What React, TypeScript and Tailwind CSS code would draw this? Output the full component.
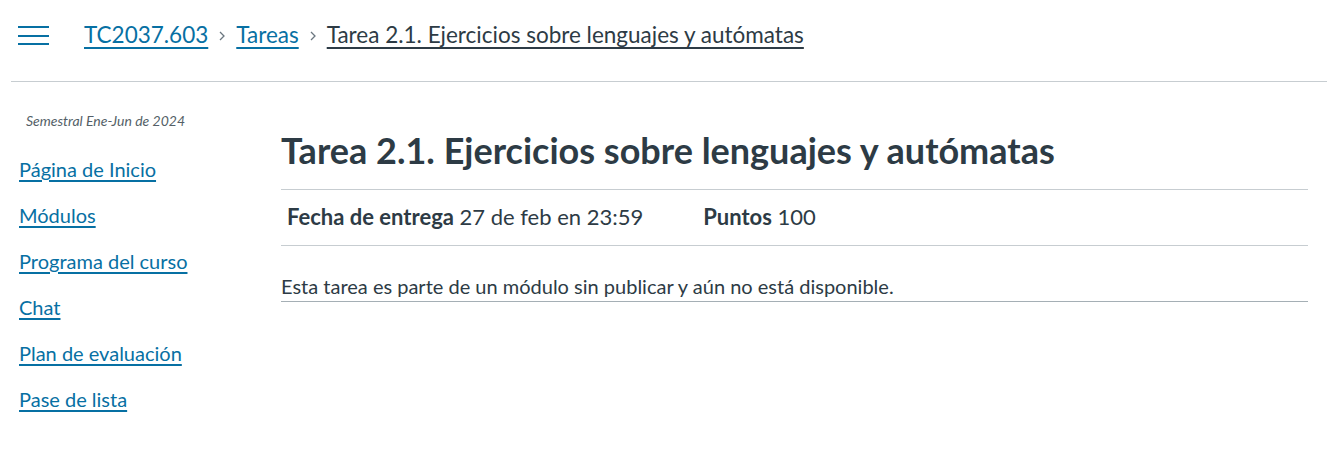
const navLinks = [
  "Página de Inicio",
  "Módulos",
  "Programa del curso",
  "Chat",
  "Plan de evaluación",
  "Pase de lista",
];

function Hamburger() {
  return (
    <button className="flex flex-col justify-between w-[31px] h-[19px] mt-[2px]">
      <span className="block h-[2px] w-full bg-[#0770A3]" />
      <span className="block h-[2px] w-full bg-[#0770A3]" />
      <span className="block h-[2px] w-full bg-[#0770A3]" />
    </button>
  );
}

function Chevron() {
  return (
    <svg width="8" height="12" viewBox="0 0 8 12" className="mx-[10px] mt-[2px]">
      <path d="M2 2 L6 6 L2 10" fill="none" stroke="#6B7780" strokeWidth="1.3" />
    </svg>
  );
}

export default function App() {
  return (
    <div className="w-[1327px] h-[457px] bg-white text-[#2D3B45] font-['Lato','Open_Sans',sans-serif] overflow-hidden">
      {/* Header / breadcrumbs */}
      <div className="ml-[11px] h-[82px] border-b border-[#C7CDD1] flex items-center pl-[7px] pb-[12px]">
        <Hamburger />
        <nav className="flex items-center ml-[35px] text-[22.5px]">
          <a className="text-[#0770A3] underline underline-offset-[4px]">TC2037.603</a>
          <Chevron />
          <a className="text-[#0770A3] underline underline-offset-[4px]">Tareas</a>
          <Chevron />
          <span className="underline underline-offset-[4px]">Tarea 2.1. Ejercicios sobre lenguajes y autómatas</span>
        </nav>
      </div>

      <div className="flex">
        {/* Course nav */}
        <aside className="w-[281px] shrink-0 pl-[19px] pt-[28px]">
          <div className="pl-[7px] text-[14px] italic text-[#545F67]">Semestral Ene-Jun de 2024</div>
          <ul className="mt-[25px] flex flex-col gap-[20px]">
            {navLinks.map((l) => (
              <li key={l} className="h-[26px] leading-[26px] text-[20px]">
                <a className="text-[#0770A3] underline underline-offset-[3px]">{l}</a>
              </li>
            ))}
          </ul>
        </aside>

        {/* Main content */}
        <main className="w-[1027px] pt-[45px]">
          <h1 className="text-[36px] font-bold leading-[46px] pb-[16px] border-b border-[#C7CDD1]">
            Tarea 2.1. Ejercicios sobre lenguajes y autómatas
          </h1>
          <div className="flex items-center h-[56px] pl-[6px] pb-[3px] text-[22px] border-b border-[#C7CDD1]">
            <span>
              <span className="font-bold">Fecha de entrega</span> 27 de feb en 23:59
            </span>
            <span className="ml-[60px]">
              <span className="font-bold">Puntos</span> 100
            </span>
          </div>
          <p className="pt-[27px] pb-[2px] text-[20px] leading-[26px] border-b border-[#A5AFB5]">
            Esta tarea es parte de un módulo sin publicar y aún no está disponible.
          </p>
        </main>
      </div>
    </div>
  );
}
